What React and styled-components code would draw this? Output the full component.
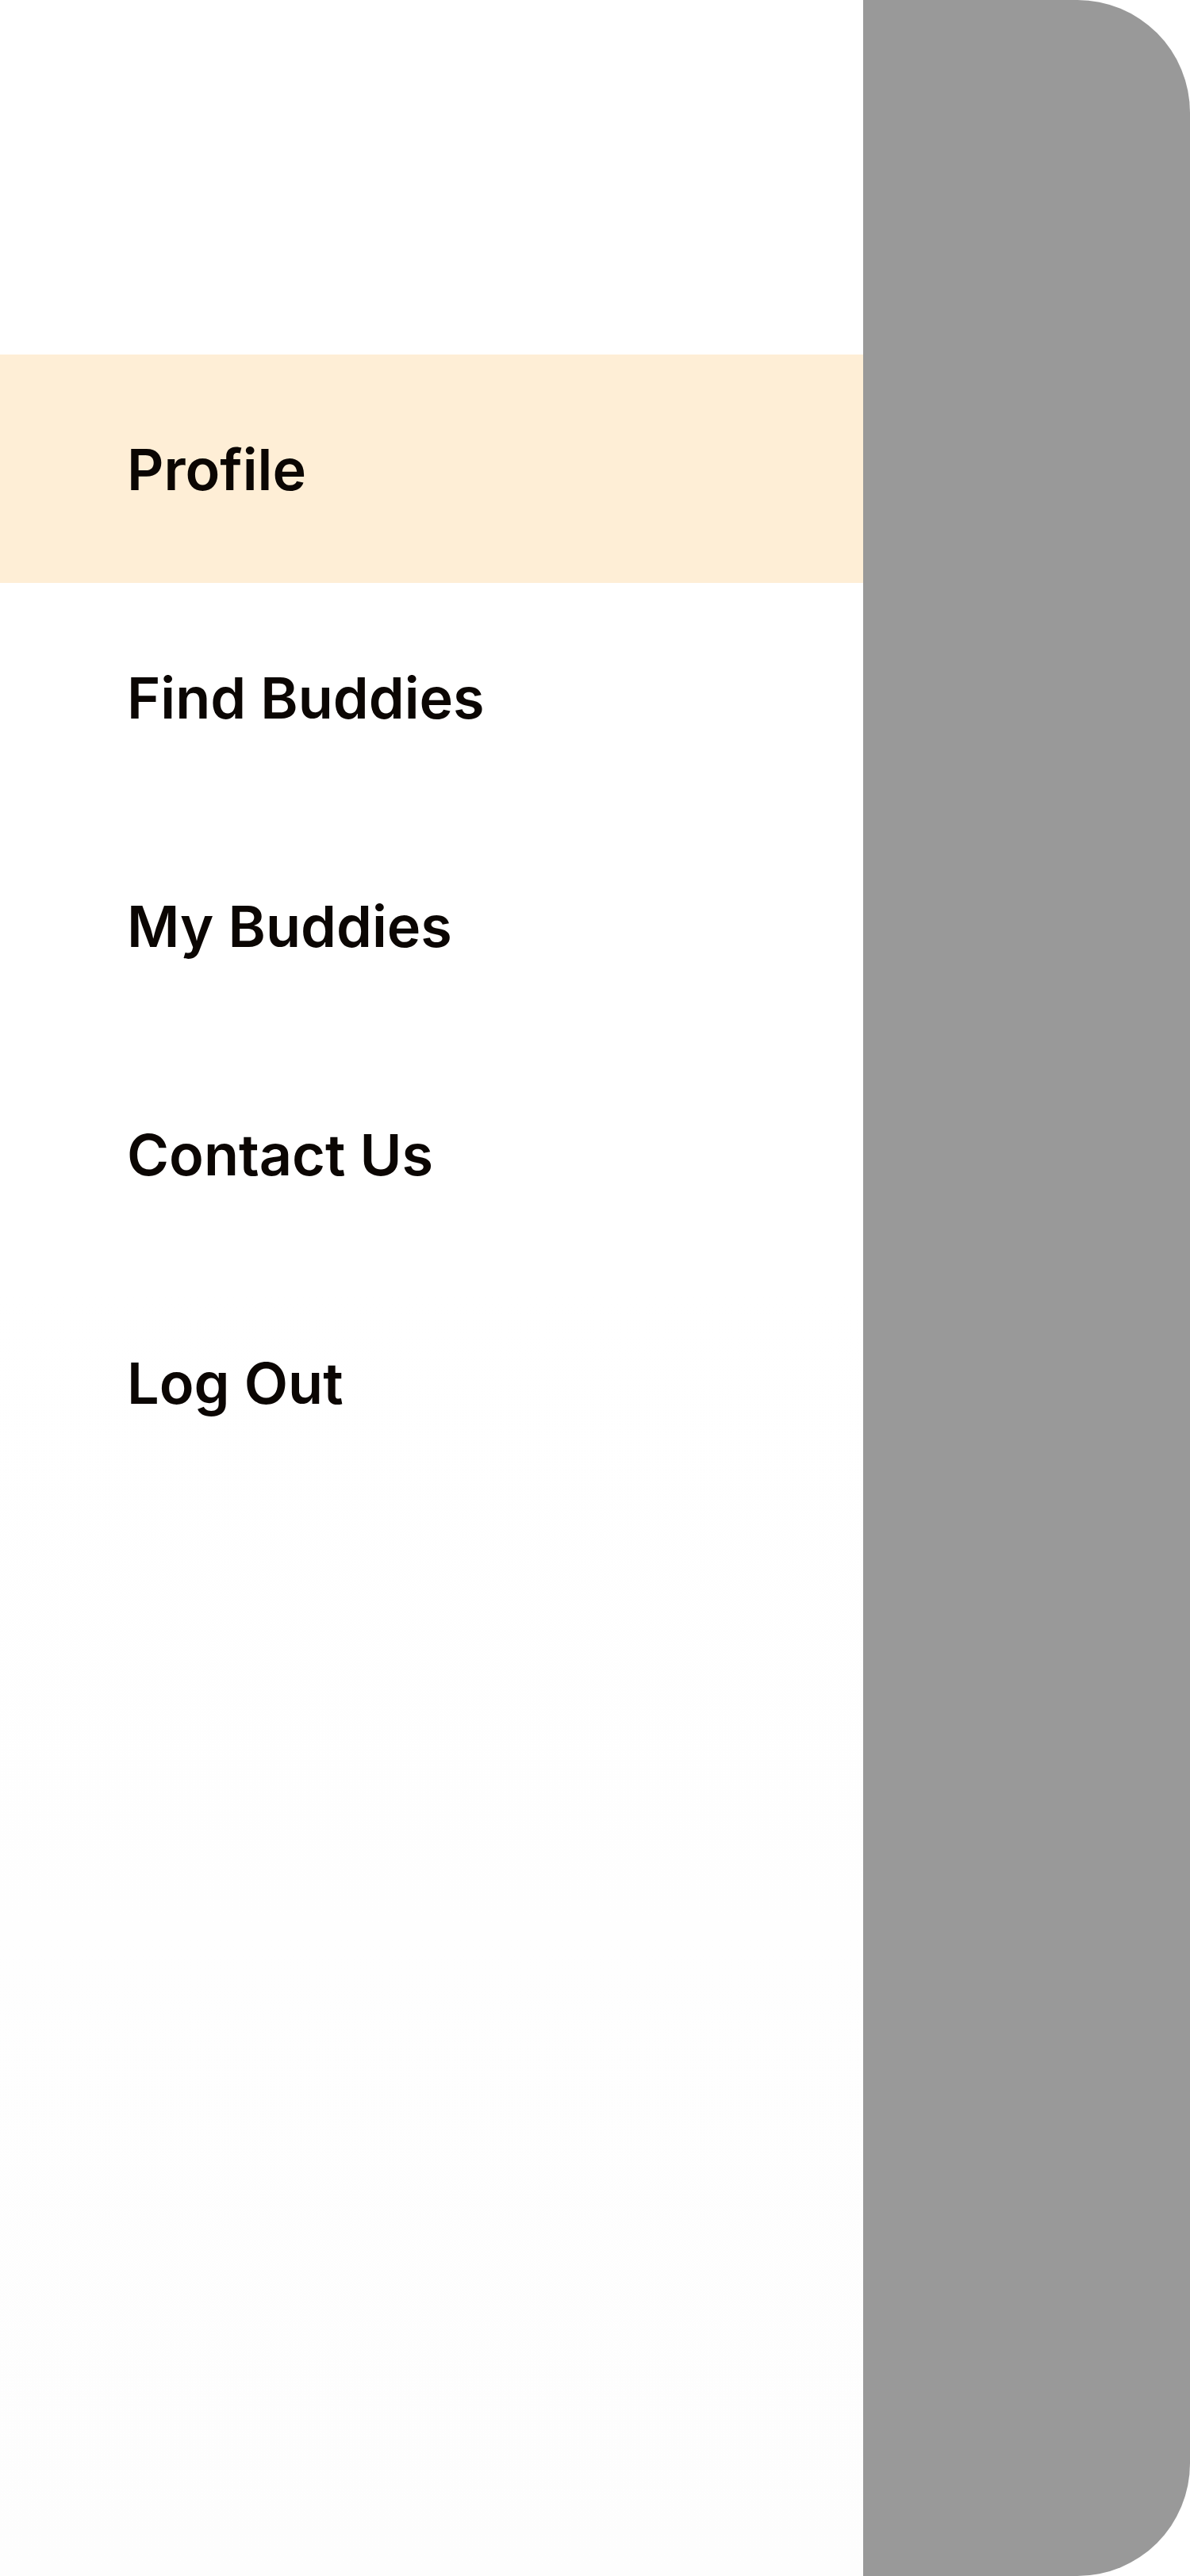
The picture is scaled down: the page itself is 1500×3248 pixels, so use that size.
import React from 'react'
import styled, { createGlobalStyle } from 'styled-components'

const GlobalStyle = createGlobalStyle`
  html, body {
    margin: 0;
    padding: 0;
    background: #ffffff;
  }
  body {
    font-family: Inter, 'Noto Sans', sans-serif;
  }
`

const links = ['Profile', 'Find Buddies', 'My Buddies', 'Contact Us', 'Log Out']

const App = () => {
  const active = 'Profile'

  return (
    <>
      <GlobalStyle />
      <Layout>
        <Drawer>
          <Menu>
            {links.map((label) => (
              <MenuItem key={label} $active={label === active}>
                {label}
              </MenuItem>
            ))}
          </Menu>
        </Drawer>
        <Backdrop />
      </Layout>
    </>
  )
}

const Layout = styled.main`
  display: grid;
  grid-template-columns: 1088px 1fr;
  width: 1500px;
  height: 3248px;
`

const Drawer = styled.nav`
  background: linear-gradient(#ffffff 0%, #ffffff 50%, #fdfdfd 100%);
  padding-top: 447px;
`

const Menu = styled.ul`
  list-style: none;
  margin: 0;
  padding: 0;
  display: flex;
  flex-direction: column;
`

const MenuItem = styled.li`
  height: 288px;
  display: flex;
  align-items: center;
  padding-left: 160px;
  background: ${({ $active }) => ($active ? '#feeed6' : 'transparent')};
  color: #0b0603;
  font-size: 72px;
  font-weight: 600;
  cursor: pointer;
`

const Backdrop = styled.div`
  background: #999999;
  border-radius: 0 142px 142px 0;
`

export default App
